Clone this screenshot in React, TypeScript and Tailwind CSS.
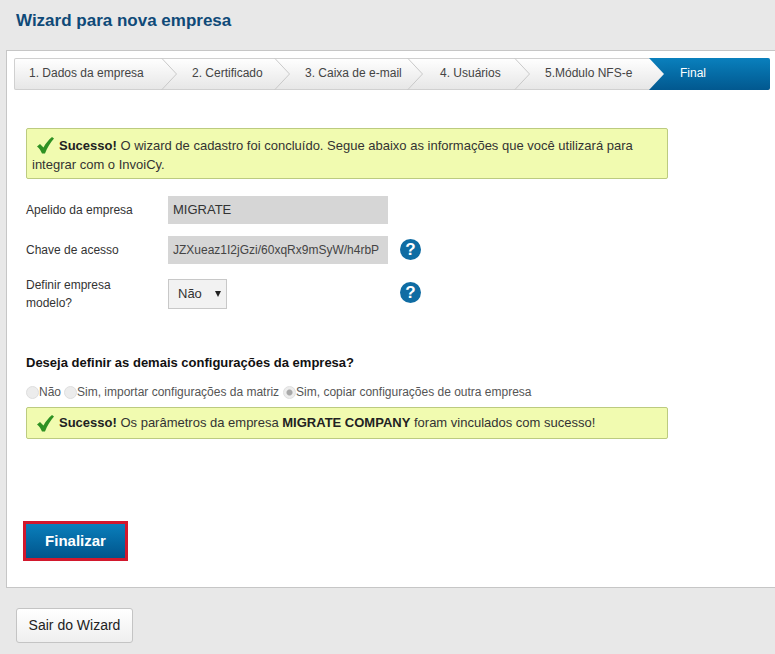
const steps = [
  { label: '1. Dados da empresa', width: 'w-[163px]', pad: 'pl-[15px]' },
  { label: '2. Certificado', width: 'w-[113px]', pad: 'pl-[15px]' },
  { label: '3. Caixa de e-mail', width: 'w-[133px]', pad: 'pl-[15px]' },
  { label: '4. Usuários', width: 'w-[107px]', pad: 'pl-[17px]' },
  { label: '5.Módulo NFS-e', width: 'w-[135px]', pad: 'pl-[15px]' },
]

function Chevron() {
  return (
    <svg className="absolute right-0 top-0" width="16" height="32" viewBox="0 0 16 32" fill="none">
      <path d="M0.5 0L15.5 16L0.5 32" stroke="#c9c9c9" strokeWidth="1" />
    </svg>
  )
}

function BlueArrow() {
  return (
    <svg className="absolute right-0 top-0" width="16" height="32" viewBox="0 0 16 32">
      <defs>
        <linearGradient id="finalStep" x1="0" y1="0" x2="0" y2="1">
          <stop offset="0" stopColor="#0a80bd" />
          <stop offset="1" stopColor="#02588f" />
        </linearGradient>
      </defs>
      <path d="M0 0H16V32H0L15 16Z" fill="url(#finalStep)" />
    </svg>
  )
}

function CheckIcon() {
  return (
    <svg className="shrink-0" width="17" height="17" viewBox="0 0 17 17">
      <path d="M0 9.5L3 7L6.5 10.5C8.5 6.5 11.5 3 15 0L17 1.5C13 6 10 11 8 16.5H5C4 14 2.5 11.5 0 9.5Z" fill="#2e9123" />
    </svg>
  )
}

function HelpIcon() {
  return (
    <span className="flex h-[21px] w-[21px] items-center justify-center rounded-full bg-[#0f6ca3] text-[17px] leading-none font-bold text-white">
      ?
    </span>
  )
}

function Radio({ checked }: { checked?: boolean }) {
  return (
    <span
      className={
        checked
          ? 'block h-[13px] w-[13px] shrink-0 rounded-full border border-[#dedede] bg-[radial-gradient(circle,#a8a8a8_0,#a8a8a8_2.5px,#ececec_3.5px)]'
          : 'block h-[13px] w-[13px] shrink-0 rounded-full border border-[#dedede] bg-[#ececec]'
      }
    />
  )
}

export default function App() {
  return (
    <main className="h-[654px] overflow-hidden bg-[#e8e8e8] font-['Liberation_Sans',Arial,sans-serif] text-[#222]">
      <h1 className="h-[50px] pt-[11px] pl-4 text-[17px] leading-[20px] font-bold text-[#0f4a78]">
        Wizard para nova empresa
      </h1>

      {/* Painel principal */}
      <section className="ml-[6px] h-[538px] border border-r-0 border-[#c6c6c6] bg-white pt-[7px] pl-[7px]">
        <div className="flex h-[32px] w-[756px] rounded-[2px] bg-gradient-to-b from-[#ffffff] to-[#e6e6e6] shadow-[inset_0_0_0_1px_#d0d0d0] text-xs leading-[30px] text-[#444]">
          {steps.map((step) => (
            <div key={step.label} className={`relative ${step.width} ${step.pad}`}>
              {step.label}
              {step.label.startsWith('5') ? <BlueArrow /> : <Chevron />}
            </div>
          ))}
          <div className="flex-1 rounded-r-[2px] bg-gradient-to-b from-[#0a80bd] to-[#02588f] pl-[15px] leading-[30px] text-white">
            Final
          </div>
        </div>

        <div className="mt-[38px] ml-3 h-[51px] w-[642px] rounded-[2px] border border-[#bccb80] bg-[#f1fbb0] pt-[7px] pl-[5px] text-[13px] leading-[19px] text-[#333]">
          <div className="flex items-center pl-[5px]">
            <CheckIcon />
            <span className="ml-[5px] whitespace-nowrap">
              <b className="text-[#222]">Sucesso!</b> O wizard de cadastro foi concluído. Segue abaixo as informações que você utilizará para
            </span>
          </div>
          <div>integrar com o InvoiCy.</div>
        </div>

        {/* Formulario */}
        <div className="mt-[17px] ml-3 text-xs text-[#333]">
          <div className="flex h-[28px] items-center">
            <span className="w-[142px]">Apelido da empresa</span>
            <span className="flex h-[28px] w-[220px] items-center bg-[#d6d6d6] pl-[5px] text-[13px] text-[#333]">MIGRATE</span>
          </div>
          <div className="mt-3 flex h-[28px] items-center">
            <span className="w-[142px]">Chave de acesso</span>
            <span className="flex h-[28px] w-[220px] items-center bg-[#d6d6d6] pl-[5px] text-xs text-[#444]">JZXueaz1I2jGzi/60xqRx9mSyW/h4rbP</span>
            <span className="mb-[2px] ml-3"><HelpIcon /></span>
          </div>
          <div className="mt-[12px] flex h-[36px] items-center">
            <span className="w-[142px] leading-[18px]">
              Definir empresa
              <br />
              modelo?
            </span>
            <span className="flex h-[30px] w-[59px] items-center border border-[#c8c8c8] bg-[#f2f2f2] pl-[9px] text-[13px] text-[#333]">
              Não
              <svg className="mb-[1px] ml-[13px]" width="6" height="6" viewBox="0 0 6 6">
                <path d="M0 0H6L3 6Z" fill="#222" />
              </svg>
            </span>
            <span className="mb-[4px] ml-[173px]"><HelpIcon /></span>
          </div>
        </div>

        <h2 className="mt-[42px] ml-3 text-[13px] leading-[18px] font-bold text-[#111]">
          Deseja definir as demais configurações da empresa?
        </h2>

        <div className="mt-[12px] ml-3 flex h-[16px] items-center text-xs text-[#555]">
          <Radio />
          <span>Não</span>
          <span className="ml-[3px]"><Radio /></span>
          <span>Sim, importar configurações da matriz</span>
          <span className="ml-[4px]"><Radio checked /></span>
          <span>Sim, copiar configurações de outra empresa</span>
        </div>

        <div className="mt-[7px] ml-3 flex h-[32px] w-[642px] items-center rounded-[2px] border border-[#bccb80] bg-[#f1fbb0] pl-[10px] text-[13px] text-[#333]">
          <CheckIcon />
          <span className="ml-[5px]">
            <b className="text-[#222]">Sucesso!</b> Os parâmetros da empresa <b className="text-[#222]">MIGRATE COMPANY</b> foram vinculados com sucesso!
          </span>
        </div>

        <button className="mt-[82px] ml-[9px] h-[40px] w-[105px] border-[3px] border-[#d2182d] bg-gradient-to-b from-[#0a7fbc] to-[#02558c] text-[15px] font-bold text-white">
          Finalizar
        </button>
      </section>

      <button className="mt-5 ml-4 h-[35px] w-[117px] rounded-[3px] border border-[#c4c4c4] bg-gradient-to-b from-[#ffffff] to-[#efefef] pb-[1px] text-sm text-[#222]">
        Sair do Wizard
      </button>
    </main>
  )
}
